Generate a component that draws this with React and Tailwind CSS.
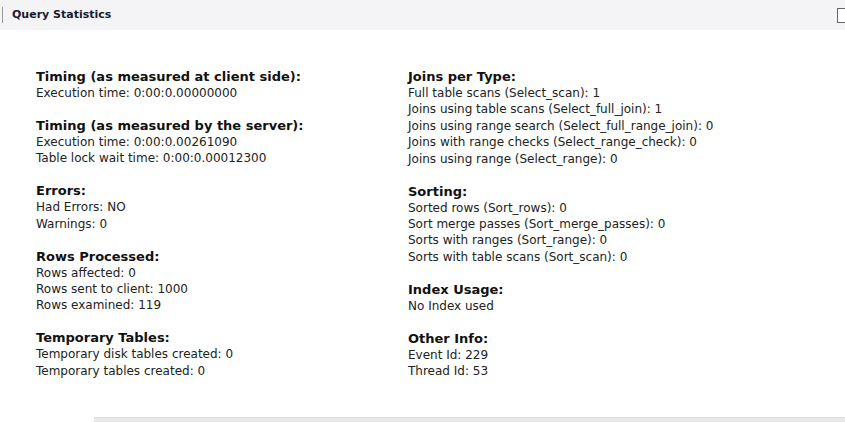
import React from "react";

const left = [
  { title: "Timing (as measured at client side):", lines: ["Execution time: 0:00:0.00000000"] },
  {
    title: "Timing (as measured by the server):",
    lines: ["Execution time: 0:00:0.00261090", "Table lock wait time: 0:00:0.00012300"],
  },
  { title: "Errors:", lines: ["Had Errors: NO", "Warnings: 0"] },
  {
    title: "Rows Processed:",
    lines: ["Rows affected: 0", "Rows sent to client: 1000", "Rows examined: 119"],
  },
  {
    title: "Temporary Tables:",
    lines: ["Temporary disk tables created: 0", "Temporary tables created: 0"],
  },
];

const right = [
  {
    title: "Joins per Type:",
    lines: [
      "Full table scans (Select_scan): 1",
      "Joins using table scans (Select_full_join): 1",
      "Joins using range search (Select_full_range_join): 0",
      "Joins with range checks (Select_range_check): 0",
      "Joins using range (Select_range): 0",
    ],
  },
  {
    title: "Sorting:",
    lines: [
      "Sorted rows (Sort_rows): 0",
      "Sort merge passes (Sort_merge_passes): 0",
      "Sorts with ranges (Sort_range): 0",
      "Sorts with table scans (Sort_scan): 0",
    ],
  },
  { title: "Index Usage:", lines: ["No Index used"] },
  { title: "Other Info:", lines: ["Event Id: 229", "Thread Id: 53"] },
];

function Section({ title, lines }) {
  return (
    <div className="mb-[15.5px]">
      <p className="text-[13px] font-bold leading-[17px] text-[#111]">{title}</p>
      {lines.map((l) => (
        <p key={l} className="text-[12px] leading-[16.4px] text-[#222]">
          {l}
        </p>
      ))}
    </div>
  );
}

export default function App() {
  return (
    <div
      className="w-[845px] h-[422px] bg-white overflow-hidden flex flex-col"
      style={{ fontFamily: '"DejaVu Sans", Verdana, sans-serif' }}
    >
      {/* header */}
      <div className="h-[30px] bg-[#f4f4f6] flex items-center justify-between shrink-0">
        <div className="flex items-center">
          <div className="w-px h-[16px] bg-[#9a9a9a] ml-[2px]" />
          <span className="ml-[9px] text-[11px] font-bold text-[#1a1a2e]">Query Statistics</span>
        </div>
        <div className="w-[8px] h-[15px] border border-[#666] border-r-0 bg-white" />
      </div>

      {/* body */}
      <div className="flex-1 grid grid-cols-[372px_1fr] pl-[36px] pt-[38px]">
        <div>
          {left.map((s) => (
            <Section key={s.title} {...s} />
          ))}
        </div>
        <div>
          {right.map((s) => (
            <Section key={s.title} {...s} />
          ))}
        </div>
      </div>

      {/* bottom scrollbar */}
      <div className="ml-[94px] h-[5px] bg-[#e9e9e9] border-t border-[#dcdcdc] shrink-0" />
    </div>
  );
}
